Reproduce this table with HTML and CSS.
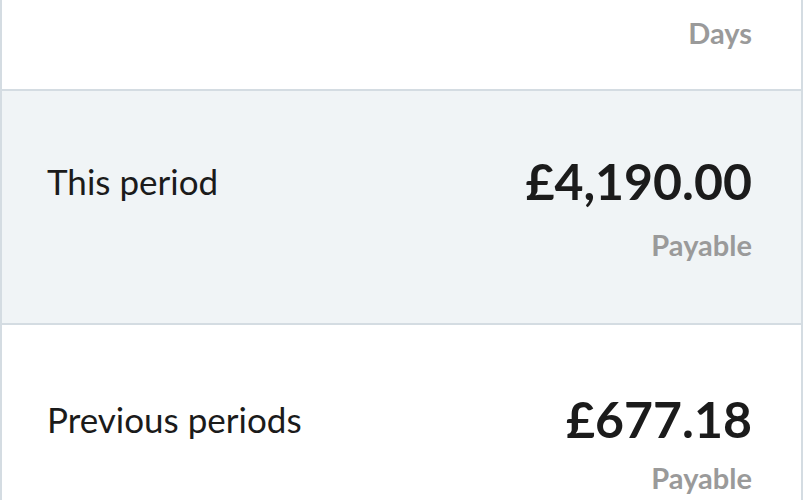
FILE: index.html
```html
<!DOCTYPE html>
<html lang="en">
<head>
<meta charset="utf-8">
<link rel="stylesheet" href="styles.css">
</head>
<body>
<div class="panel">
  <div class="row row-top">
    <div class="meta">Days</div>
  </div>
  <div class="row row-current">
    <div class="line">
      <div class="label">This period</div>
      <div class="amount">£4,190.00</div>
    </div>
    <div class="meta">Payable</div>
  </div>
  <div class="row row-previous">
    <div class="line">
      <div class="label">Previous periods</div>
      <div class="amount">£677.18</div>
    </div>
    <div class="meta">Payable</div>
  </div>
</div>
</body>
</html>
```

FILE: styles.css
```css
html, body {
  margin: 0;
  padding: 0;
  background: #ffffff;
}
body {
  font-family: Lato, "Open Sans", sans-serif;
  color: #1b1b1b;
  overflow: hidden;
}
.panel {
  width: 803px;
  box-sizing: border-box;
  border-left: 2px solid #d4dce2;
  border-right: 2px solid #d4dce2;
  min-height: 500px;
}
.row {
  display: flex;
  flex-direction: column;
  padding: 0 49px 0 45px;
  border-bottom: 2px solid #d4dce2;
}
.row-top {
  padding-top: 16px;
  padding-bottom: 38px;
}
.row-current {
  background: #f0f4f6;
  padding-top: 60px;
  padding-bottom: 60px;
}
.row-previous {
  padding-top: 64px;
  padding-bottom: 60px;
  border-bottom: none;
}
.line {
  display: flex;
  justify-content: space-between;
  align-items: center;
  margin-bottom: 17px;
}
.row-previous .line {
  margin-bottom: 12px;
}
.label {
  font-size: 35px;
  font-weight: 400;
  line-height: 1.2;
}
.amount {
  font-size: 50px;
  font-weight: 700;
  line-height: 1.2;
}
.meta {
  align-self: flex-end;
  font-size: 29px;
  font-weight: 700;
  line-height: 1.2;
  color: #9a9a9a;
}
```
